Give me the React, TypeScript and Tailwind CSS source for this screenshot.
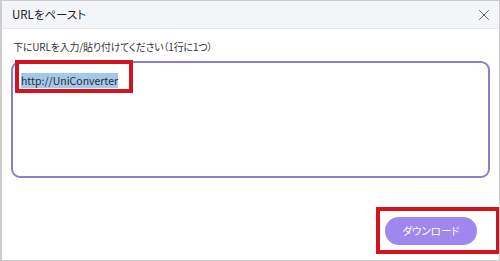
import { X } from "lucide-react";

const jp = "[font-family:'Noto_Sans_CJK_JP','Noto_Sans',sans-serif] [font-feature-settings:'palt']";

export default function App() {
  return (
    <div className={`relative flex h-[261px] w-[500px] flex-col overflow-hidden border border-[#cdcdcd] border-l-2 bg-white text-[#333] ${jp}`}>
      <div className="flex h-[28px] shrink-0 items-center justify-between border-b border-[#e6e7ec] bg-[#f4f5f9] pl-[10px] pr-[6px]">
        <span className="text-[11.5px] leading-none text-[#222]">URLをペースト</span>
        <X className="h-[18px] w-[18px] text-[#555]" strokeWidth={1.2} />
      </div>

      <div className="flex flex-1 flex-col px-[9px] pt-[11px]">
        <p className="pl-[2px] text-[10px] leading-[14px] tracking-[-0.02em] text-[#333]">
          下にURLを入力/貼り付けてください（1行に1つ）
        </p>

        <div className="mt-[7px] h-[117px] w-[479px] rounded-[9px] border-2 border-[#8f7bd2] px-[8px] pt-[3px]">
          <span className="bg-[#a3c8ec] text-[10.5px] leading-[13px] text-[#2b2b2b]">http://UniConverter</span>
        </div>

        <div className="mt-[39px] flex justify-end pr-[13px]">
          <button
            type="button"
            className="flex h-[28px] w-[92px] items-center justify-center rounded-full bg-[#a086ef] text-[10.5px] text-white"
          >
            ダウンロード
          </button>
        </div>
      </div>

      {/* annotation boxes */}
      <div className="absolute left-[13px] top-[59px] h-[33px] w-[118px] border-[4px] border-[#d3141c]" />
      <div className="absolute left-[374px] top-[206px] h-[47px] w-[124px] border-[4px] border-[#d3141c]" />
    </div>
  );
}
